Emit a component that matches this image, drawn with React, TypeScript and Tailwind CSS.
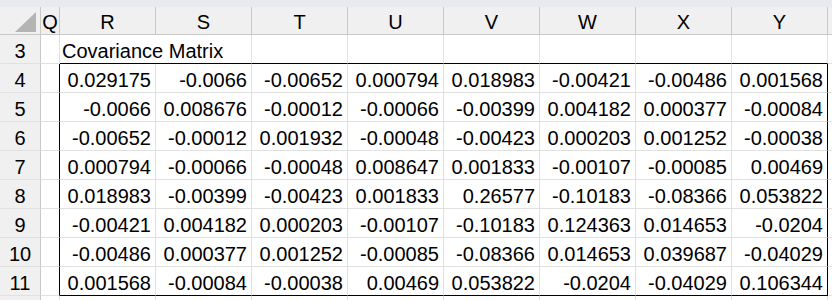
import React from 'react';

const COLS = ['R', 'S', 'T', 'U', 'V', 'W', 'X', 'Y'];

const matrix: string[][] = [
  ['0.029175', '-0.0066', '-0.00652', '0.000794', '0.018983', '-0.00421', '-0.00486', '0.001568'],
  ['-0.0066', '0.008676', '-0.00012', '-0.00066', '-0.00399', '0.004182', '0.000377', '-0.00084'],
  ['-0.00652', '-0.00012', '0.001932', '-0.00048', '-0.00423', '0.000203', '0.001252', '-0.00038'],
  ['0.000794', '-0.00066', '-0.00048', '0.008647', '0.001833', '-0.00107', '-0.00085', '0.00469'],
  ['0.018983', '-0.00399', '-0.00423', '0.001833', '0.26577', '-0.10183', '-0.08366', '0.053822'],
  ['-0.00421', '0.004182', '0.000203', '-0.00107', '-0.10183', '0.124363', '0.014653', '-0.0204'],
  ['-0.00486', '0.000377', '0.001252', '-0.00085', '-0.08366', '0.014653', '0.039687', '-0.04029'],
  ['0.001568', '-0.00084', '-0.00038', '0.00469', '0.053822', '-0.0204', '-0.04029', '0.106344'],
];

const grid = 'grid grid-cols-[41px_19px_repeat(8,96px)_1fr]';

const RowHeader: React.FC<{ n?: number }> = ({ n }) => (
  <div className="flex items-center justify-center pt-[3px] bg-[#f0f0f0] border-r border-b border-r-[#c9c9c9] border-b-[#e0e0e0]">
    {n}
  </div>
);

const App: React.FC = () => {
  return (
    <div className="w-[832px] h-[300px] overflow-hidden bg-white text-black text-[20px] leading-none font-['Liberation_Sans',Arial,sans-serif]">
      {/* top strip */}
      <div className="h-[7px] bg-[#e7eaee]" />

      {/* column headers */}
      <div className={`${grid} h-[28px] bg-[#f0f0f0]`}>
        <div className="relative border-r border-b border-[#c9c9c9]">
          <svg className="absolute right-[4px] bottom-[2px]" width="21" height="20" viewBox="0 0 21 20">
            <polygon points="21,0 21,20 0,20" fill="#b4b4b4" />
          </svg>
        </div>
        <div className="flex items-center justify-center pt-[3px] border-r border-b border-[#c9c9c9]">Q</div>
        {COLS.map((c) => (
          <div key={c} className="flex items-center justify-center pt-[3px] border-r border-b border-[#c9c9c9]">
            {c}
          </div>
        ))}
        <div className="border-b border-[#c9c9c9]" />
      </div>

      {/* row 3 */}
      <div className={`${grid} h-[29px]`}>
        <RowHeader n={3} />
        <div className="border-r border-b border-[#e0e0e0]" />
        <div className="col-span-2 flex items-center pl-[2px] pt-[3px] border-r border-b border-r-[#e0e0e0] border-b-black whitespace-nowrap">
          Covariance Matrix
        </div>
        {COLS.slice(2).map((c) => (
          <div key={c} className="border-r border-b border-r-[#e0e0e0] border-b-black" />
        ))}
        <div className="border-b border-[#e0e0e0]" />
      </div>

      {/* rows 4-11 */}
      {matrix.map((row, i) => {
        const last = i === matrix.length - 1;
        return (
          <div key={i} className={`${grid} h-[29px]`}>
            <RowHeader n={i + 4} />
            <div className="border-r border-b border-r-black border-b-[#e0e0e0]" />
            {row.map((v, j) => (
              <div
                key={j}
                className={`flex items-center justify-end pr-[4px] pt-[3px] border-r border-b ${
                  j === row.length - 1 ? 'border-r-black' : 'border-r-[#e0e0e0]'
                } ${last ? 'border-b-black' : 'border-b-[#e0e0e0]'}`}
              >
                {v}
              </div>
            ))}
            <div className="border-b border-[#e0e0e0]" />
          </div>
        );
      })}

      {/* row 12 (cut off) */}
      <div className={`${grid} h-[29px]`}>
        <RowHeader />
        <div className="border-r border-[#e0e0e0]" />
        {COLS.map((c) => (
          <div key={c} className="border-r border-[#e0e0e0]" />
        ))}
        <div />
      </div>
    </div>
  );
};

export default App;
